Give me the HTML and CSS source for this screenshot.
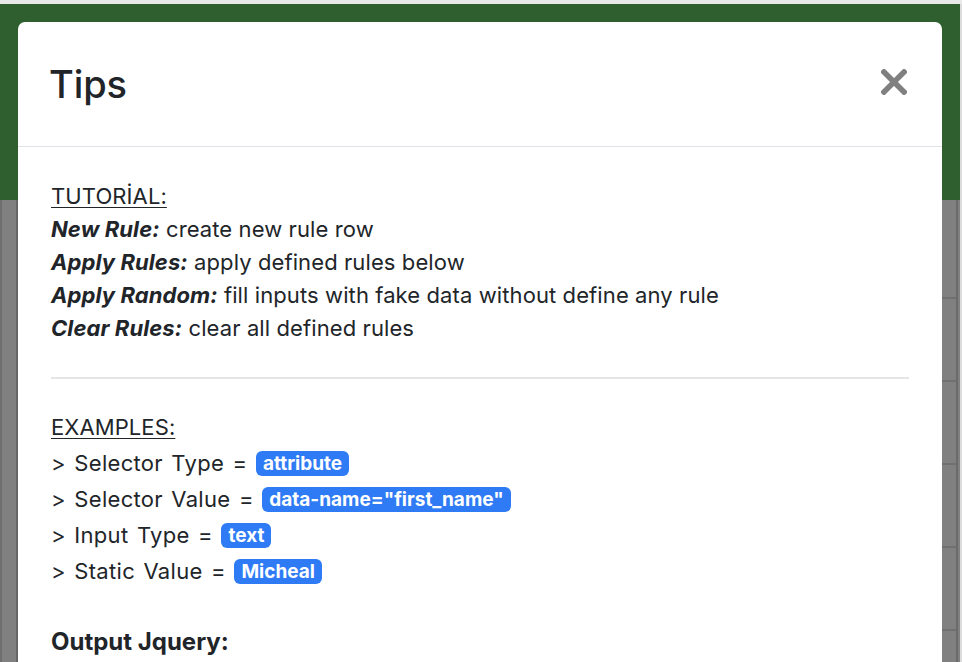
FILE: index.html
```html
<!DOCTYPE html>
<html>
<head>
<meta charset="utf-8">
<link rel="stylesheet" href="styles.css">
</head>
<body>
<div class="page">
  <div class="topstrip"></div>
  <div class="navbar"></div>
  <div class="table">
    <div class="row first"></div>
    <div class="row"></div>
    <div class="row"></div>
    <div class="row"></div>
    <div class="row"></div>
    <div class="row"></div>
  </div>
</div>

<div class="modal">
  <div class="modal-header">
    <h1 class="modal-title">Tips</h1>
    <svg class="close" width="26" height="26" viewBox="0 0 26 26" aria-label="Close">
      <path d="M3 3 L23 23 M23 3 L3 23" stroke="#808080" stroke-width="5.5" stroke-linecap="square"/>
    </svg>
  </div>
  <div class="modal-body">
    <p class="lines">
      <span class="heading">TUTORİAL:</span><br>
      <b><i>New Rule:</i></b> create new rule row<br>
      <b><i>Apply Rules:</i></b> apply defined rules below<br>
      <b><i>Apply Random:</i></b> fill inputs with fake data without define any rule<br>
      <b><i>Clear Rules:</i></b> clear all defined rules
    </p>
    <hr class="divider">
    <p class="lines examples">
      <span class="heading">EXAMPLES:</span><br>
      &gt; Selector Type = <span class="badge">attribute</span><br>
      &gt; Selector Value = <span class="badge">data-name="first_name"</span><br>
      &gt; Input Type = <span class="badge">text</span><br>
      &gt; Static Value = <span class="badge">Micheal</span>
    </p>
    <p class="output"><b>Output Jquery:</b></p>
  </div>
</div>
</body>
</html>
```

FILE: styles.css
```css
html, body {
  margin: 0;
  padding: 0;
  overflow: hidden;
}
body {
  width: 962px;
  height: 662px;
  background: #808080;
  font-family: Inter, "Noto Sans", "Liberation Sans", sans-serif;
  position: relative;
}
.page {
  height: 662px;
  box-sizing: border-box;
  border-left: 2px solid #6f6f6f;
  border-right: 2px solid #dcdcdc;
}
.topstrip {
  height: 4px;
  background: #e9e9e9;
  margin-left: -2px;
  margin-right: -2px;
}
.navbar {
  height: 196px;
  background: #2f5f2f;
  margin-left: -2px;
}
.table {
  margin-left: 14px;
  margin-right: 2px;
  border-left: 2px solid #666666;
  border-right: 2px solid #6b6b6b;
  height: 462px;
  overflow: hidden;
}
.row {
  height: 81px;
  border-bottom: 2px solid #707070;
}
.row.first {
  height: 97px;
}
.modal {
  position: absolute;
  left: 18px;
  top: 22px;
  width: 924px;
  height: 700px;
  background: #ffffff;
  border-radius: 7px;
  color: #212529;
}
.modal-header {
  height: 125px;
  box-sizing: border-box;
  padding: 0 33px 0 33px;
  border-bottom: 1px solid #dee2e6;
  display: flex;
  align-items: center;
  justify-content: space-between;
}
.modal-title {
  margin: 2px 0 0 -2px;
  font-size: 38px;
  font-weight: 500;
  line-height: 1.2;
  letter-spacing: -0.1px;
}
.close {
  margin-right: 2px;
  margin-top: -4px;
}
.modal-body {
  padding: 33px 33px;
}
.lines {
  margin: 0;
  font-size: 22px;
  line-height: 33px;
  letter-spacing: 0.1px;
}
.heading {
  text-decoration: underline;
  text-decoration-thickness: 1px;
  text-underline-offset: 3px;
}
.divider {
  border: 0;
  border-top: 2px solid #e5e5e5;
  margin: 32px 0 30px 0;
}
.examples {
  line-height: 36px;
  letter-spacing: 0.3px;
  word-spacing: 2px;
}
.examples .heading {
  letter-spacing: 0.1px;
}
.badge {
  display: inline-block;
  background: #2f7bf5;
  color: #ffffff;
  font-weight: 700;
  font-size: 19px;
  line-height: 25px;
  padding: 0 7px;
  border-radius: 6px;
  letter-spacing: 0;
  word-spacing: 0;
  vertical-align: 1px;
}
.output {
  margin: 37px 0 0 0;
  font-size: 24px;
  line-height: 32px;
}
```
